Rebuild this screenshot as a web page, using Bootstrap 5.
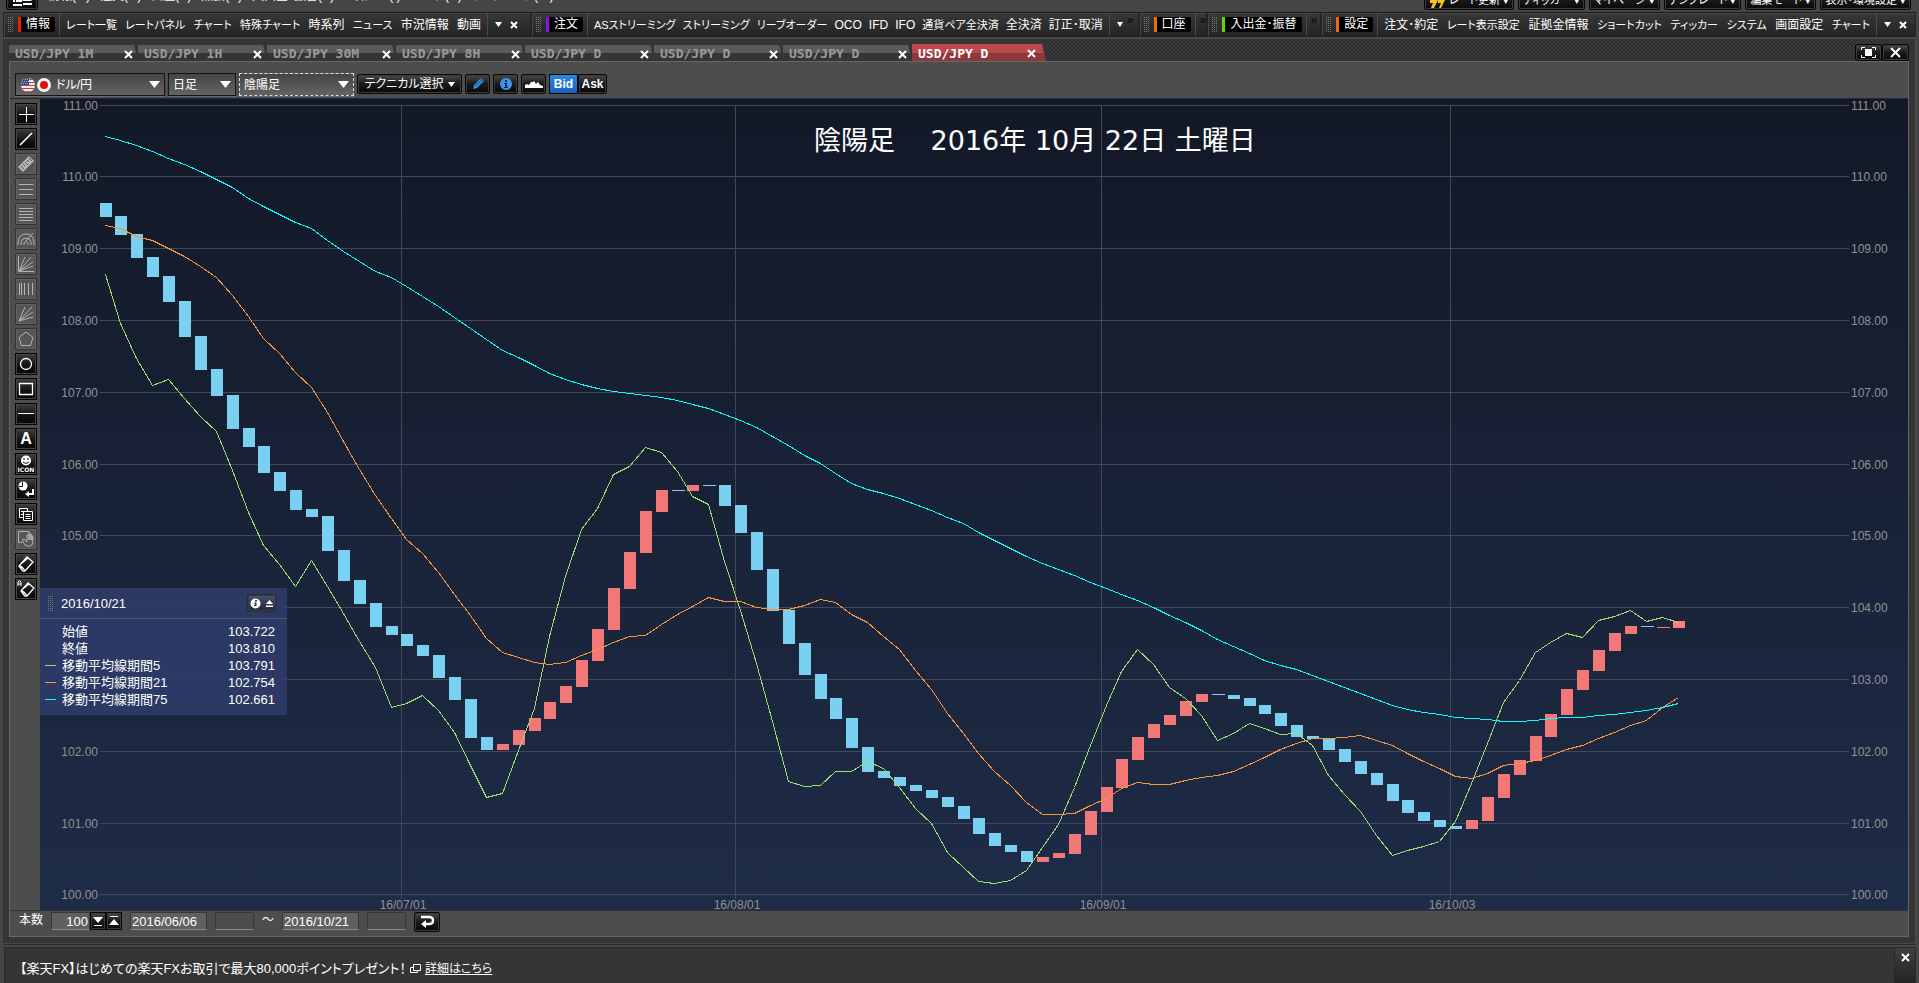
<!DOCTYPE html>
<html lang="ja">
<head>
<meta charset="utf-8">
<meta name="viewport" content="width=device-width, initial-scale=1">
<title>USD/JPY D</title>
<link href="https://cdn.jsdelivr.net/npm/bootstrap@5.3.0/dist/css/bootstrap.min.css" rel="stylesheet">
<style>
body{background:#464646;color:#fff;font:12px/16px "Liberation Sans","Noto Sans CJK JP",sans-serif;font-feature-settings:"palt";overflow:hidden}
button,input,select{font:inherit;font-feature-settings:inherit;color:inherit;letter-spacing:inherit}
button{background:none;border:0;padding:0;white-space:nowrap}
svg{display:block;flex:none}
.menubar{height:12px;overflow:hidden;padding:0 8px 2px 6px;background:#454545}
.menubar .menus{gap:10px}
.menubar .menus button{height:24px;padding-bottom:5px}
.darkbtn{border:1px solid #080808;border-radius:2px;background:linear-gradient(#4a4a4a,#1a1a1a 50%,#090909);box-shadow:inset 0 0 0 1px #3b3b3b}
.menubar .darkbtn{height:21px;padding:0 4px;font-size:11px}
.tool-row{height:24px;padding:0 3px}
.tool-group{border:1px solid #242424;border-top-color:#1c1c1c;background:linear-gradient(#383838,#242424);height:25px;padding:0 4px 0 3px;min-width:0;flex-basis:0;box-shadow:inset 1px 1px #454545}
.grip{width:6px;height:15px;flex:none;background:conic-gradient(#777 25%,transparent 0) 0 0/2px 2px}
.cat{background:#000;border-left:3px solid var(--c);border-radius:0 2px 2px 0;height:15px;line-height:15px;padding:0 5px;margin:0 4px 0 5px;color:#fff;white-space:nowrap}
.items{border-left:1px solid #4c4c4c;border-right:1px solid #4c4c4c;padding:0 6px;height:22px;min-width:0}
.items .kn{font-size:11px}
.items .wd{font-size:11px}
.ends{gap:8px;padding-left:7px;font-size:10px}
.more{height:22px;line-height:12px;color:#111;font-weight:bold;padding-left:4px;border-left:1px solid #4c4c4c}
.chart-window{margin:2px 3px 0;padding:7px 6px 6px;border:solid #4c4c4c;border-width:1px 1px 0 0;background:repeating-conic-gradient(#303030 0 25%,#3a3a3a 0 50%) 0 0/4px 4px}
.chart-tabs{height:15px;padding-right:0}
.chart-tab{width:129px;height:16px;color:#9b9b9b;background:linear-gradient(#5a5a5a 0 50%,#353535 50%);border:0;font:bold 13px/16px "DejaVu Sans Mono",monospace;padding:2px 5px 0 6px;clip-path:polygon(0 0,97% 0,100% 100%,0 100%)}
.chart-tab.active{width:134px;height:17px;color:#fff;background:linear-gradient(#b84a4a 0 55%,#8d383a 55%);padding-right:10px}
.winbtn{width:27px;height:17px}
.panel-body{background:#4d4d4d;border:1px solid #666}
.opt-row{height:36px;padding:11px 5px 2px;gap:3px}
.pick{position:relative;border:1px solid #141414;background:linear-gradient(#454545,#646464);height:23px;box-shadow:0 1px #696969}
.pick.focus-box{border:1px dashed #ddd}
.pick select{appearance:none;background:none;border:0;width:100%;height:100%;padding:0 20px 0 4px;outline:0}
.pick select option{color:#000}
.pick .flags{position:absolute;left:4px;top:3px}
.pick .arrow{position:absolute;right:4px;top:7px}
.opt-btn{height:20px;margin-top:1px;display:flex;align-items:center;justify-content:center}
.iconbtn{width:25px}
.seg{width:29px;height:20px;margin-top:1px;font:bold 12px/18px "Liberation Sans",sans-serif;border:1px solid #080808}
.bid{background:linear-gradient(#2a86e0,#1763bd)}
.side{width:30px;padding:4px 0 0 5px;gap:3px;border-top:1px solid #242424}
.side button{width:22px;height:22px;border:1px solid #050505;background:linear-gradient(#3d3d3d,#111 60%,#080808);display:flex;align-items:center;justify-content:center;box-shadow:inset 0 0 0 1px #444;color:#fff}
.side button:disabled{border-color:#333;background:#565656;box-shadow:inset 0 0 0 1px #626262;color:#b4b4b4}
.side svg{fill:none;stroke:currentColor}
.plot{border-top:1px solid #1e2a40;background:linear-gradient(#121826,#1f2c48)}
.plot svg.canvas{position:absolute;inset:0;width:100%;height:100%}
.axis{font:12px "Liberation Sans",sans-serif;fill:#919191}
.headline{font:27px "DejaVu Sans","Noto Sans CJK JP",sans-serif;fill:#fff;font-feature-settings:normal;white-space:pre}
.legend-box{position:absolute;left:0;bottom:195px;width:247px;height:127px;background:rgba(45,60,104,.9);font:13px/17px "Liberation Sans","Noto Sans CJK JP",sans-serif}
.legend-head{height:31px;border-bottom:1px solid #4c5470;padding:0 10px 0 7px}
.legend-head .darkbtn{width:30px;height:18px;background:linear-gradient(#4a506a,#22283c);border-color:#252b42}
.legend-box table{width:238px;margin:4px 0 0 5px}
.legend-box td{padding:0;height:17px}
.swatch{width:17px}
.swatch i{display:block;width:11px;height:1px;background:var(--c)}
.range-row{height:26px;padding:1px 8px 0 9px;border-top:1px solid #333}
.range-row input{height:18px;border:1px solid #383838;border-bottom-color:#888;background:#606060;border-radius:0;padding:0 1px;font-size:13px;outline:0}
.range-row input.empty{width:39px;background:#4d4d4d}
.range-row .step{width:16px;height:18px;border-radius:0;display:flex;align-items:center;justify-content:center}
.notice{margin:4px 3px 0 4px;height:36px;background:#353535;border:1px solid #292929;border-bottom:0;padding-left:15px;box-shadow:0 -2px #464646,0 -3px #2a2a2a}
.notice .msg{font-size:13px;padding-top:6px}
.notice a{color:#fff;font-size:12px}
.notice .closebox{width:21px;height:36px;background:linear-gradient(#404040,#222);border-left:1px solid #292929;align-items:flex-start;padding-top:5px}
</style>
</head>
<body class="d-flex flex-column vh-100">

<header class="menubar d-flex align-items-end justify-content-between">
  <nav class="menus d-flex align-items-end p-0">
    <button class="darkbtn" aria-label="メニュー"><svg width="22" height="20" fill="#fff"><path d="M2 9h8v2H2zM2 13h2v2H2zM5 13h6v2H5zM2 17h9v2H2zM16 9l5 5h-10zM12 16h9v2h-9z"/></svg></button>
    <button>情報(M)</button><button>注文(O)</button><button>口座(A)</button><button>照会(R)</button><button>入出金･振替(E)</button><button>お知らせ(I)</button><button>ヘルプ(H)</button><button>ウェブリンク(W)</button>
  </nav>
  <div class="d-flex gap-1">
    <button class="darkbtn d-flex align-items-center gap-1"><svg width="16" height="20"><path d="M1 8l5-2 3 4-4 8H2l2-5H1zM9 8l5-2 2 4-4 8h-2l2-5H9z" fill="#f2c41d"/></svg>レート更新 ▾</button>
    <button class="darkbtn">ティッカー ▾</button><button class="darkbtn">マイページ ▾</button><button class="darkbtn">テンプレート ▾</button><button class="darkbtn">編集モード ▾</button><button class="darkbtn">表示･環境設定 ▾</button>
  </div>
</header>

<div class="tool-row d-flex">
  <div class="tool-group d-flex align-items-center" style="flex-grow:520">
    <span class="grip"></span><span class="cat" style="--c:#f21a00">情報</span>
    <div class="items d-flex align-items-center justify-content-between flex-grow-1"><button class="wd">レート一覧</button><button class="kn">レートパネル</button><button class="kn">チャート</button><button class="wd">特殊チャート</button><button>時系列</button><button class="kn">ニュース</button><button>市況情報</button><button>動画</button></div>
    <div class="ends d-flex align-items-center pe-2"><button aria-label="その他"><svg width="7" height="5"><path d="M0 0h7L3.500 5z" fill="#fff"/></svg></button><button aria-label="閉じる"><svg width="8" height="8"><path d="M1 1l6 6M7 1l-6 6" stroke="#fff" stroke-width="2"/></svg></button></div>
  </div>
  <div class="tool-group d-flex align-items-center" style="flex-grow:600">
    <span class="grip"></span><span class="cat" style="--c:#8a10ea">注文</span>
    <div class="items d-flex align-items-center justify-content-between flex-grow-1"><button class="kn">ASストリーミング</button><button class="kn">ストリーミング</button><button class="kn">リーブオーダー</button><button>OCO</button><button>IFD</button><button>IFO</button><button class="wd">通貨ペア全決済</button><button>全決済</button><button>訂正･取消</button></div>
    <div class="ends d-flex align-items-center"><button aria-label="その他"><svg width="6" height="5"><path d="M0 0h6L3 5z" fill="#fff"/></svg></button></div><span class="more border-0">»</span>
  </div>
  <div class="tool-group d-flex align-items-center" style="flex-grow:60"><span class="grip"></span><span class="cat" style="--c:#ee6a10">口座</span><span class="more">»</span></div>
  <div class="tool-group d-flex align-items-center" style="flex-grow:105"><span class="grip"></span><span class="cat flex-grow-1" style="--c:#63d40c">入出金･振替</span><span class="more">»</span></div>
  <div class="tool-group d-flex align-items-center" style="flex-grow:587">
    <span class="grip"></span><span class="cat" style="--c:#ee6a10">設定</span>
    <div class="items d-flex align-items-center justify-content-between flex-grow-1"><button>注文･約定</button><button class="wd">レート表示設定</button><button>証拠金情報</button><button class="kn">ショートカット</button><button class="kn">ティッカー</button><button class="kn">システム</button><button>画面設定</button><button class="kn">チャート</button></div>
    <div class="ends d-flex align-items-center pe-1"><button aria-label="その他"><svg width="7" height="5"><path d="M0 0h7L3.500 5z" fill="#fff"/></svg></button><button aria-label="閉じる"><svg width="8" height="8"><path d="M1 1l6 6M7 1l-6 6" stroke="#fff" stroke-width="2"/></svg></button></div>
  </div>
</div>

<main class="chart-window d-flex flex-column flex-grow-1">
  <div class="chart-tabs d-flex align-items-end justify-content-between">
    <div class="d-flex align-items-end" id="tabs"></div>
    <div class="d-flex">
      <button class="darkbtn winbtn d-flex align-items-center justify-content-center" aria-label="最大化"><svg width="15" height="11"><path d="M4 2h7v7H4z" fill="#fff"/><path d="M4 .5H.5V3M11 .5h3.500V3M4 10.500H.5V8M11 10.500h3.500V8" fill="none" stroke="#fff"/></svg></button>
      <button class="darkbtn winbtn d-flex align-items-center justify-content-center" aria-label="閉じる"><svg width="11" height="11"><path d="M1 1l9 9M10 1l-9 9" stroke="#fff" stroke-width="2"/></svg></button>
    </div>
  </div>

  <section class="panel-body d-flex flex-column flex-grow-1">
    <div class="opt-row d-flex">
      <div class="pick" style="width:150px">
        <svg class="flags" width="32" height="16"><defs><clipPath id="us"><circle cx="8" cy="8" r="7"/></clipPath></defs><g clip-path="url(#us)"><path fill="#eee" d="M0 0h16v16H0z"/><path stroke="#d33a3a" d="M0 2.500h16M0 5.500h16M0 8.500h16M0 11.500h16M0 14.500h16"/><path fill="#2b4a94" d="M0 0h9v8H0z"/><path stroke="#a9bbe0" stroke-dasharray="1 1" d="M1 2.500h8M2 4.500h7M1 6.500h8"/></g><circle cx="24" cy="8" r="7" fill="#f2f2f2"/><circle cx="24" cy="8" r="4" fill="#e00f0f"/></svg>
        <select aria-label="通貨ペア" style="padding-left:40px"><option>ドル/円</option></select><svg class="arrow" width="11" height="7"><path d="M0 0h11L5.500 7z" fill="#fff"/></svg>
      </div>
      <div class="pick" style="width:68px"><select aria-label="足種"><option>日足</option></select><svg class="arrow" width="11" height="7"><path d="M0 0h11L5.500 7z" fill="#fff"/></svg></div>
      <div class="pick focus-box" style="width:115px"><select aria-label="チャート種類"><option>陰陽足</option></select><svg class="arrow" width="11" height="7"><path d="M0 0h11L5.500 7z" fill="#fff"/></svg></div>
      <button class="darkbtn opt-btn gap-1" style="width:105px">テクニカル選択<svg width="7" height="5"><path d="M0 0h7L3.500 5z" fill="#fff"/></svg></button>
      <button class="darkbtn opt-btn iconbtn" aria-label="描画"><svg width="14" height="14"><path d="M2 12l1-4 7-7 3 3-7 7z" fill="#2f8fe8"/><path d="M4 9l7-6M9 1l4 4" stroke="#175a9c"/></svg></button>
      <button class="darkbtn opt-btn iconbtn" aria-label="情報"><svg width="14" height="14"><circle cx="7" cy="7" r="6" fill="#3a97ee"/><path d="M6 3h2v2H6zM5 6h3v4h1v1H5v-1h1V7H5z" fill="#10253c"/></svg></button>
      <button class="darkbtn opt-btn iconbtn" aria-label="エリア"><svg width="18" height="10"><path d="M0 9V6l2-1 2 1 2-3h2l1-1 2 3 2-2 2 3 3 1v2z" fill="#fff"/></svg></button>
      <div class="d-flex"><button class="seg bid">Bid</button><button class="seg darkbtn">Ask</button></div>
    </div>

    <div class="d-flex flex-grow-1">
      <div class="side d-flex flex-column">
        <button aria-label="十字"><svg width="18" height="18"><path d="M9.500 2v15M2 9.500h15"/></svg></button>
        <button aria-label="直線"><svg width="16" height="16"><path d="M2 14L14 2" stroke-width="1.600"/></svg></button>
        <button disabled aria-label="定規"><svg width="18" height="18"><path d="M1 12L12 1l5 5L6 17z" fill="currentColor" stroke="none"/><path d="M4 11l3 3M6 9l2 2M8 7l3 3M10 5l2 2M12 3l3 3" stroke="#555"/></svg></button>
        <button disabled aria-label="三本線"><svg width="16" height="16"><path d="M1 3.500h14M1 8.500h14M1 13.500h14"/></svg></button>
        <button disabled aria-label="五本線"><svg width="16" height="16"><path d="M1 2.500h14M1 5.500h14M1 8.500h14M1 11.500h14M1 14.500h14"/></svg></button>
        <button disabled aria-label="円弧"><svg width="18" height="16"><path d="M1 14V11q1-8 8-8t8 8v3M4 14v-3q1-4 5-4t5 4v3M7 14v-2q2-3 4 0v2M9 10l7-8"/></svg></button>
        <button disabled aria-label="ギャンファン"><svg width="18" height="18"><path d="M1.500 1v15.500H17M2 16L8 2M2 16L14 2M2 16l14-9M2 16l14-5"/></svg></button>
        <button disabled aria-label="縦線"><svg width="16" height="16"><path d="M1.500 2v12M3.500 2v12M6.500 2v12M10.500 2v12M14.500 2v12"/></svg></button>
        <button disabled aria-label="ファン"><svg width="18" height="18"><path d="M2 16L8 2M2 16L15 2M2 16l14-9M2 16l14-4"/></svg></button>
        <button disabled aria-label="五角形"><svg width="16" height="16"><path d="M8 1l7 5.500-2.500 8h-9L1 6.500z"/></svg></button>
        <button aria-label="円"><svg width="16" height="16"><circle cx="8" cy="8" r="5.500" stroke-width="1.300"/></svg></button>
        <button aria-label="四角"><svg width="16" height="14"><path d="M1.500 1.500h13v11h-13z" stroke-width="1.300"/></svg></button>
        <button aria-label="水平線"><svg width="16" height="16"><path d="M0 7.500h16"/></svg></button>
        <button aria-label="文字" style="font:bold 16px 'Liberation Sans',sans-serif">A</button>
        <button class="flex-column" aria-label="アイコン"><svg width="12" height="11"><circle cx="6" cy="5.500" r="5" fill="#fff" stroke="none"/><path d="M4 3v2M8 3v2M3 7q3 3 6 0" stroke="#111"/></svg><span style="font:bold 6px/7px 'DejaVu Sans',sans-serif">ICON</span></button>
        <button aria-label="時刻戻し"><svg width="18" height="18"><circle cx="6" cy="6" r="4.500" fill="#fff" stroke="none"/><path d="M5.500 2v4.500H2" stroke="#111"/><path d="M16 9v5h-6" stroke-width="2"/><path d="M8 14l4-3v6z" fill="#fff" stroke="none"/></svg></button>
        <button aria-label="コピー"><svg width="16" height="16"><path d="M9.500 5V2.500h-8v9H5M3 5.500h3M3 8.500h2M5.500 5.500h9v9h-9zM7.500 8.500h5M7.500 10.500h5M7.500 12.500h5"/></svg></button>
        <button disabled aria-label="移動"><svg width="18" height="18"><path d="M12 4V1.500H1.500v11H5M7 9L5 10l3 5q4 3 7 0 1-3 1-8l-1-1v4V5l-1-1v6V4l-2 0v6V5l-2 0v7z"/></svg></button>
        <button aria-label="消去"><svg width="18" height="18"><path d="M2 11l8-9 6 5-8 9q-2 1-3-1zM2 11q3 0 6 5M5 8l6-5" stroke-width="1.300"/></svg></button>
        <button aria-label="全消去"><svg width="18" height="18"><path d="M4 11l7-8 6 5-7 8q-2 1-3-1zM4 11q3 0 6 5M7 8l5-4" stroke-width="1.300"/><path d="M1 6V2l1-1h1l1 1v4M1 4h3"/></svg></button>
      </div>
      <div class="plot position-relative flex-grow-1">
        <svg class="canvas" id="chart" role="img" aria-label="USD/JPY 陰陽足"></svg>
        <div class="legend-box">
          <div class="legend-head d-flex align-items-center"><span class="grip me-2"></span><span class="flex-grow-1">2016/10/21</span>
            <button class="darkbtn d-flex align-items-center justify-content-center gap-1" aria-label="たたむ"><svg width="11" height="11"><circle cx="5.500" cy="5.500" r="5" fill="#fff"/><path d="M5 2h2v1.500H5zM4 4.500h2.500V8H4V7h1V5.500H4z" fill="#2a3150"/></svg><svg width="9" height="9"><path d="M4.500 1L8 5H1zM1 6.500h7v1.500H1z" fill="#fff"/></svg></button></div>
          <table>
            <tr><td class="swatch"></td><td>始値</td><td class="text-end pe-2">103.722</td></tr>
            <tr><td></td><td>終値</td><td class="text-end pe-2">103.810</td></tr>
            <tr><td class="swatch"><i style="--c:#98e070"></i></td><td>移動平均線期間5</td><td class="text-end pe-2">103.791</td></tr>
            <tr><td class="swatch"><i style="--c:#f7963c"></i></td><td>移動平均線期間21</td><td class="text-end pe-2">102.754</td></tr>
            <tr><td class="swatch"><i style="--c:#10fbfb"></i></td><td>移動平均線期間75</td><td class="text-end pe-2">102.661</td></tr>
          </table>
        </div>
      </div>
    </div>

    <div class="range-row d-flex align-items-start">
      <label for="bars" class="me-2">本数</label>
      <input id="bars" value="100" class="text-end" style="width:39px">
      <button class="darkbtn step" aria-label="減らす"><svg width="10" height="10"><path d="M0 1h10L5 7zM1 9h8v1H1z" fill="#fff"/></svg></button><button class="darkbtn step" aria-label="増やす"><svg width="10" height="10"><path d="M0 9h10L5 3zM1 0h8v1H1z" fill="#fff"/></svg></button>
      <input class="ms-2" value="2016/06/06" aria-label="開始日" style="width:77px"><input class="empty ms-2" aria-label="開始時刻">
      <span class="px-2">～</span>
      <input value="2016/10/21" aria-label="終了日" style="width:77px"><input class="empty ms-2" aria-label="終了時刻">
      <button class="darkbtn ms-2 d-flex align-items-center justify-content-center" style="width:26px;height:20px" aria-label="反映"><svg width="16" height="14"><path d="M2 2h8q4 0 4 3.500T10 9H6" fill="none" stroke="#fff" stroke-width="2.500"/><path d="M2 9l5-4v8z" fill="#fff"/></svg></button>
    </div>
  </section>
</main>

<footer class="notice d-flex align-items-center">
  <div class="msg flex-grow-1 d-flex align-items-center"><span>【楽天FX】はじめての楽天FXお取引で最大80,000ポイントプレゼント！</span><svg class="ms-1 me-1" width="11" height="10" fill="none" stroke="#fff"><path d="M3.500.5h7v6h-7zM3 3.500H.5v5h7V7"/></svg><a href="#">詳細はこちら</a></div>
  <button class="closebox d-flex justify-content-center" aria-label="閉じる"><svg width="9" height="9"><path d="M1 1l7 7M8 1l-7 7" stroke="#fff" stroke-width="2"/></svg></button>
</footer>

<script src="https://cdn.jsdelivr.net/npm/bootstrap@5.3.0/dist/js/bootstrap.bundle.min.js"></script>
<script>
const names=['1M','1H','30M','8H','D','D','D','D'];
document.getElementById('tabs').innerHTML=names.map((n,i)=>`<button class="chart-tab d-flex align-items-center justify-content-between${i==7?' active':''}"><span>USD/JPY ${n}</span><svg width="9" height="9"><path d="M1 1l7 7M8 1l-7 7" stroke="#fff" stroke-width="2"/></svg></button>`).join('');

// Chart data on a 1868 x 811 design grid; the vertical origin of the series is 99, the horizontal one 40.
const X0=40,Y0=99;
const bars="203 217,216 235,234 258,257 277,276 302,301 337,336 370,369 396,395 429,428 447,446 473,472 491,490 510,509 517,516 551,550 581,580 604,603 627,626 635,634 646,645 656,655 678,677 700,699 738,737 750,744 750,730 745,718 731,702 719,686 703,660 687,629 661,588 630,552 589,511 553,490 512,490 491,485 491,485 486,485 506,505 533,532 570,569 611,610 644,643 675,674 699,698 719,718 748,747 772,771 778,777 786,785 791,790 798,797 807,806 819,818 834,833 846,845 852,851 862,857 862,853 858,834 854,811 835,787 812,759 788,737 760,724 738,715 725,701 716,694 702,694 695,695 699,698 706,705 714,713 726,725 737,736 739,738 750,749 762,761 774,773 785,784 801,800 813,812 821,820 827,826 829,820 829,797 821,774 798,760 775,736 761,714 737,689 715,670 690,650 671,633 651,626 634,626 627,627 628,621 628".split(',').map(s=>s.split(' ').map(Number));
const isUp=i=>(i>=25&&i<=35)||i==37||(i>=59&&i<=69)||(i>=86&&i!=97);
const ma={
 '#98e070':[274,323,358,385,379,398,416,431,470,512,545,564,586,560,586,613,641,667,707,703,695,710,732,765,797,793,750,708,636,576,529,508,474,466,447,452,471,496,504,561,610,663,721,781,786,785,771,771,761,768,787,808,823,852,867,881,883,880,870,847,824,787,745,705,671,649,664,687,698,715,740,733,723,728,734,733,745,775,794,811,835,855,850,846,841,821,783,743,702,680,652,642,633,637,620,616,610,621,617,622],
 '#f7963c':[225,228,236,240,248,256,266,277,295,316,338,353,372,387,412,441,469,495,518,539,553,572,594,615,638,652,657,662,664,662,655,649,642,636,635,624,614,606,597,601,601,607,609,609,605,599,602,614,622,636,649,670,689,713,733,753,771,785,802,814,814,813,805,798,788,782,784,784,780,777,775,771,764,757,749,743,738,738,737,735,740,745,753,761,768,776,778,773,765,763,760,755,749,745,738,732,725,720,707,697],
 '#10fbfb':[136,140,145,151,158,164,171,179,187,198,206,214,222,228,240,251,261,271,277,286,296,306,317,328,339,350,357,365,373,379,384,388,391,393,395,397,400,404,408,414,420,427,436,445,455,463,473,483,489,493,498,504,510,517,523,532,540,548,556,563,569,575,582,588,594,600,607,615,622,630,639,646,653,660,665,669,675,681,687,693,699,705,709,712,714,717,718,719,721,721,720,718,717,717,715,714,712,710,707,703]
};
const rows=[105,176,248,320,392,464,535,607,679,751,823,894];
const months=[[401,'16/07/01'],[735,'16/08/01'],[1101,'16/09/01'],[1450,'16/10/03']];
const svg=document.getElementById('chart');
function draw(){
  const w=svg.clientWidth,h=svg.clientHeight,sx=w/1868,sy=h/811;
  const px=v=>Math.floor((v-X0)*sx),py=v=>Math.floor((v-Y0)*sy);
  let o='<g shape-rendering="crispEdges">';
  const L=px(100),R=px(1849);
  rows.forEach(y=>o+=`<rect x="${L}" y="${py(y)}" width="${R-L}" height="1" fill="#434856"/>`);
  months.forEach(m=>o+=`<rect x="${px(m[0])}" y="${py(105)}" width="1" height="${py(899)-py(105)}" fill="#434856"/>`);
  bars.forEach((b,i)=>{const x=px(100+Math.floor(i*15.889)),y=py(b[0]),t=b[1]-b[0]<2;
    o+=`<rect x="${x}" y="${y}" width="${Math.round((t?13:12)*sx)}" height="${Math.max(1,py(b[1])-y)}" fill="${i==99?'#ff7f7f':isUp(i)?'#f27777':'#7ad0f0'}"/>`});
  for(const c in ma)o+=`<polyline fill="none" stroke="${c}" points="${ma[c].map((y,i)=>(px(105+i*15.889)+.5)+','+(py(y)+.5)).join(' ')}"/>`;
  o+='</g>';
  rows.forEach((y,i)=>{const t=(111-i)+'.00';
    o+=`<text class="axis" x="${L-2}" y="${py(y)+5}" text-anchor="end">${t}</text><text class="axis" x="${R+2}" y="${py(y)+5}">${t}</text>`});
  months.forEach(m=>o+=`<text class="axis" x="${px(m[0])+2}" y="${h-1}" text-anchor="middle">${m[1]}</text>`);
  o+=`<text class="headline" x="${px(814)}" y="${py(150)}">陰陽足　 2016年 10月 22日 土曜日</text>`;
  svg.innerHTML=o;
}
draw();
addEventListener('resize',draw);
</script>
</body>
</html>
